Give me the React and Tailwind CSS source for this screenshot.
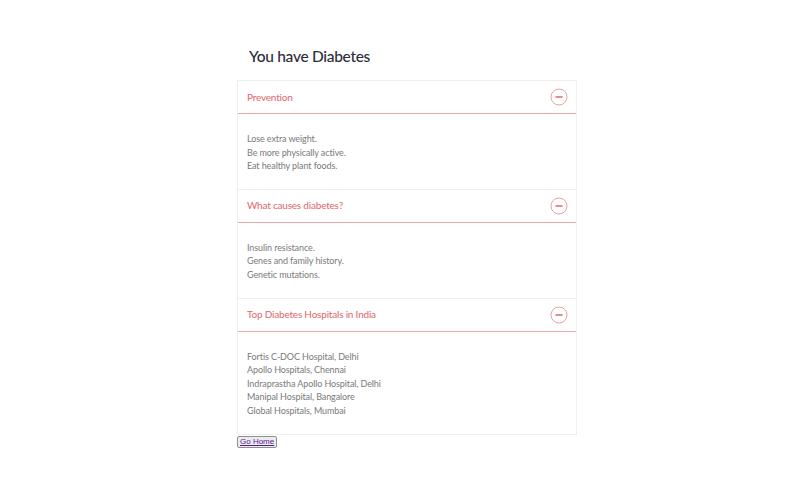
import React from 'react';

const sections = [
  { title: 'Prevention', items: ['Lose extra weight.', 'Be more physically active.', 'Eat healthy plant foods.'] },
  { title: 'What causes diabetes?', items: ['Insulin resistance.', 'Genes and family history.', 'Genetic mutations.'] },
  {
    title: 'Top Diabetes Hospitals in India',
    items: [
      'Fortis C-DOC Hospital, Delhi',
      'Apollo Hospitals, Chennai',
      'Indraprastha Apollo Hospital, Delhi',
      'Manipal Hospital, Bangalore',
      'Global Hospitals, Mumbai',
    ],
  },
];

const MinusCircle = () => (
  <svg width="18" height="18" viewBox="0 0 18 18" fill="none">
    <circle cx="9" cy="9" r="8" stroke="#eaa2a2" strokeWidth="1" />
    <line x1="5.5" y1="9" x2="12.5" y2="9" stroke="#dc6470" strokeWidth="1.5" />
  </svg>
);

const App = () => {
  return (
    <div className="w-[806px] h-[481px] bg-white" style={{ fontFamily: 'Lato, "Noto Sans", sans-serif' }}>
      <div className="w-[340px] ml-[237px] pt-[44px]">
        <h1 className="text-[15.5px] leading-[24px] font-medium tracking-[-0.3px] text-[#2d2d3a] pl-[12px] mb-[12px]">
          You have Diabetes
        </h1>
        <div className="border border-[#efefef]">
          {sections.map((s, idx) => (
            <div key={idx} className={idx > 0 ? 'border-t border-t-[#efefef]' : ''}>
              <div className="flex items-center justify-between h-[33px] pl-[9px] pr-[8px] border-b border-b-[#f0a8a8]">
                <span className="text-[10px] tracking-[-0.2px] text-[#e0666b]">{s.title}</span>
                <MinusCircle />
              </div>
              <div className="pl-[9px] pt-[18px] pb-[16px]">
                {s.items.map((it, i) => (
                  <div key={i} className="text-[9px] leading-[13.6px] tracking-[-0.1px] text-[#7a7a7a]">
                    {it}
                  </div>
                ))}
              </div>
            </div>
          ))}
        </div>
        <button
          className="mt-[1px] px-[2px] h-[12px] flex items-center bg-[#ececee] border border-[#8f8f8f] rounded-[2px] text-[8px] leading-none text-[#551a8b] underline"
          style={{ fontFamily: '"Liberation Sans", Arial, sans-serif' }}
        >
          Go Home
        </button>
      </div>
    </div>
  );
};

export default App;
